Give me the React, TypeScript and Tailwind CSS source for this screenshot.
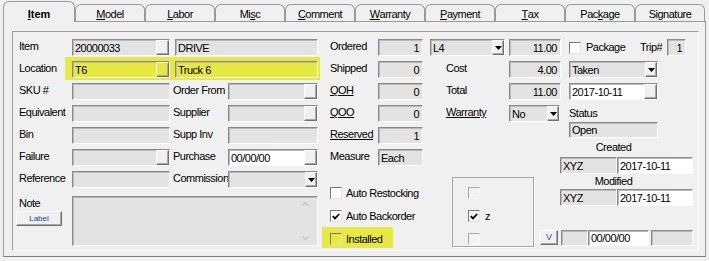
import React from 'react';

const sunken = 'border border-t-[#8a8a8a] border-l-[#8a8a8a] border-b-white border-r-white shadow-[inset_1px_1px_0_#b9b9b9]';
const raised = 'border border-t-white border-l-white border-b-[#6f6f6f] border-r-[#6f6f6f] shadow-[inset_-1px_-1px_0_#a8a8a8]';

type Tone = 'gray' | 'white' | 'yellow';
const toneBg: Record<Tone, string> = {
  gray: 'bg-[#e3e3e3]',
  white: 'bg-white',
  yellow: 'bg-[#e8e843]',
};

function Arrow() {
  return (
    <svg width="7" height="4" viewBox="0 0 7 4">
      <path d="M0 0h7L3.5 4z" fill="#000" />
    </svg>
  );
}

function Field({
  w,
  h = 'h-[17px]',
  value = '',
  right,
  tone = 'gray',
  btn,
  drop,
}: {
  w: string;
  h?: string;
  value?: string;
  right?: boolean;
  tone?: Tone;
  btn?: boolean;
  drop?: boolean;
}) {
  return (
    <div className={`flex shrink-0 items-center ${sunken} ${toneBg[tone]} ${w} ${h}`}>
      <span className={`min-w-0 flex-1 truncate pl-[2px] leading-[14px] ${right ? 'pr-[3px] text-right' : ''}`}>{value}</span>
      {btn && <span className={`w-[13px] self-stretch ${raised} ${tone === 'yellow' ? 'bg-[#e8e843]' : 'bg-[#f0f0f0]'}`} />}
      {drop && (
        <span className={`flex w-[12px] items-center justify-center self-stretch bg-[#f0f0f0] ${raised}`}>
          <Arrow />
        </span>
      )}
    </div>
  );
}

function Lbl({ w = 'w-[53px]', u, children }: { w?: string; u?: boolean; children: React.ReactNode }) {
  return <span className={`shrink-0 self-start whitespace-nowrap leading-[14px] ${u ? 'underline' : ''} ${w}`}>{children}</span>;
}

function Row({ children }: { children: React.ReactNode }) {
  return <div className="flex h-[17px]">{children}</div>;
}

function Check({ checked, bg = 'bg-white', dim }: { checked?: boolean; bg?: string; dim?: boolean }) {
  return (
    <span
      className={`flex h-[12px] w-[12px] shrink-0 items-center justify-center border ${
        dim ? 'border-t-[#a9a9a9] border-l-[#a9a9a9] border-b-[#f8f8f8] border-r-[#f8f8f8]' : 'border-t-[#7a7a7a] border-l-[#7a7a7a] border-b-[#e4e4e4] border-r-[#e4e4e4]'
      } ${bg}`}
    >
      {checked && (
        <svg width="8" height="7" viewBox="0 0 8 7">
          <path d="M0.8 3.2 3 5.4 7.2 1" fill="none" stroke="#000" strokeWidth="1.8" />
        </svg>
      )}
    </span>
  );
}

function CheckRow({ checked, bg, children }: { checked?: boolean; bg?: string; children: React.ReactNode }) {
  return (
    <div className="flex h-[12px] items-center gap-[4px]">
      <Check checked={checked} bg={bg} />
      <span className="whitespace-nowrap leading-[14px]">{children}</span>
    </div>
  );
}

function Acc({ text, at }: { text: string; at: number }) {
  if (at < 0) return <>{text}</>;
  return (
    <>
      {text.slice(0, at)}
      <span className="underline">{text[at]}</span>
      {text.slice(at + 1)}
    </>
  );
}

const tabs: [string, number][] = [
  ['Model', 0],
  ['Labor', 0],
  ['Misc', 2],
  ['Comment', 0],
  ['Warranty', 0],
  ['Payment', 0],
  ['Tax', 0],
  ['Package', 3],
  ['Signature', -1],
];

export default function App() {
  return (
    <div className="h-[261px] w-[709px] overflow-hidden bg-[#f0f0f0] font-['Liberation_Sans',Arial,sans-serif] text-[11px] tracking-[-0.5px] text-black">
      {/* tab strip */}
      <div className="ml-[3px] flex h-[22px] w-[703px] items-end border-b border-[#9a9a9a]">
        <div className="-mb-px flex h-[21px] w-[72px] shrink-0 items-center justify-center rounded-t-[6px] border border-b-0 border-[#9a9a9a] bg-[#f0f0f0] pt-[4px] font-bold tracking-normal">
          <Acc text="Item" at={0} />
        </div>
        {tabs.map(([t, u]) => (
          <div
            key={t}
            className="flex h-[17px] w-[70px] shrink-0 items-center justify-center rounded-t-[6px] border border-b-0 border-[#9a9a9a] pt-[2px]"
          >
            <Acc text={t} at={u} />
          </div>
        ))}
      </div>

      {/* tab page */}
      <div className="ml-[3px] h-[235px] w-[703px] border border-t-0 border-[#9a9a9a] border-b-[#7f7f7f] pl-[8px] pt-[9px]">
        <div className="flex h-[220px] w-[687px] items-start border border-t-[#a0a0a0] border-l-[#a0a0a0] border-b-white border-r-white pl-[6px] pt-[7px]">
          {/* left block */}
          <div className="flex w-[299px] shrink-0 flex-col">
            <div className="flex flex-col gap-[5px]">
              <Row>
                <Lbl>Item</Lbl>
                <Field w="w-[98px]" value="20000033" btn />
                <div className="ml-[5px]">
                  <Field w="w-[143px]" value="DRIVE" />
                </div>
              </Row>
              <Row>
                <Lbl>Location</Lbl>
                <div className="-mb-[2px] -ml-[7px] -mr-[2px] -mt-[4px] flex self-start bg-[#e8e843] pb-[2px] pl-[7px] pr-[2px] pt-[4px]">
                  <Field w="w-[98px]" tone="yellow" value="T6" btn />
                  <div className="ml-[5px]">
                    <Field w="w-[143px]" tone="yellow" value="Truck 6" />
                  </div>
                </div>
              </Row>
              <Row>
                <Lbl>SKU #</Lbl>
                <Field w="w-[98px]" />
                <Lbl w="w-[55px] ml-[3px]">Order From</Lbl>
                <Field w="w-[90px]" btn />
              </Row>
              <Row>
                <Lbl>Equivalent</Lbl>
                <Field w="w-[98px]" />
                <Lbl w="w-[55px] ml-[3px]">Supplier</Lbl>
                <Field w="w-[90px]" btn />
              </Row>
              <Row>
                <Lbl>Bin</Lbl>
                <Field w="w-[98px]" />
                <Lbl w="w-[55px] ml-[3px]">Supp Inv</Lbl>
                <Field w="w-[90px]" />
              </Row>
              <Row>
                <Lbl>Failure</Lbl>
                <Field w="w-[98px]" btn />
                <Lbl w="w-[55px] ml-[3px]">Purchase</Lbl>
                <Field w="w-[90px]" tone="white" value="00/00/00" btn />
              </Row>
              <Row>
                <Lbl>Reference</Lbl>
                <Field w="w-[98px]" />
                <Lbl w="w-[55px] ml-[3px]">Commission</Lbl>
                <Field w="w-[90px]" drop />
              </Row>
            </div>
            <div className="mt-[8px] flex">
              <div className="flex w-[53px] shrink-0 flex-col">
                <span className="leading-[14px]">Note</span>
                <button
                  type="button"
                  className={`-ml-[3px] mt-[1px] flex h-[15px] w-[46px] items-center justify-center bg-[#f0f0f0] text-[8px] leading-none tracking-normal text-[#1c3f94] ${raised}`}
                >
                  Label
                </button>
              </div>
              <div className={`flex h-[50px] w-[246px] justify-end bg-[#e3e3e3] ${sunken}`}>
                <div className="mr-[3px] flex w-[17px] flex-col items-center justify-between py-[4px]">
                  <svg width="7" height="6" viewBox="0 0 7 6">
                    <path d="M0.5 4.5 3.5 1.5 6.5 4.5" fill="none" stroke="#bdbdbd" strokeWidth="1.2" />
                  </svg>
                  <svg width="7" height="6" viewBox="0 0 7 6">
                    <path d="M0.5 1.5 3.5 4.5 6.5 1.5" fill="none" stroke="#bdbdbd" strokeWidth="1.2" />
                  </svg>
                </div>
              </div>
            </div>
          </div>

          {/* middle block */}
          <div className="ml-[12px] flex w-[231px] shrink-0 flex-col">
            <div className="flex flex-col gap-[5px]">
              <Row>
                <Lbl w="w-[48px]">Ordered</Lbl>
                <Field w="w-[45px]" value="1" right />
                <div className="ml-[7px]">
                  <Field w="w-[75px]" value="L4" drop />
                </div>
                <div className="ml-[4px]">
                  <Field w="w-[52px]" value="11.00" right />
                </div>
              </Row>
              <Row>
                <Lbl w="w-[48px]">Shipped</Lbl>
                <Field w="w-[45px]" value="0" right />
                <Lbl w="w-[75px] ml-[7px] pl-[16px]">Cost</Lbl>
                <div className="ml-[4px]">
                  <Field w="w-[52px]" value="4.00" right />
                </div>
              </Row>
              <Row>
                <Lbl w="w-[48px]" u>
                  QOH
                </Lbl>
                <Field w="w-[45px]" value="0" right />
                <Lbl w="w-[75px] ml-[7px] pl-[16px]">Total</Lbl>
                <div className="ml-[4px]">
                  <Field w="w-[52px]" value="11.00" right />
                </div>
              </Row>
              <Row>
                <Lbl w="w-[48px]" u>
                  QOO
                </Lbl>
                <Field w="w-[45px]" value="0" right />
                <span className="ml-[7px] w-[75px] shrink-0 self-start pl-[16px] leading-[14px]">
                  <span className="underline">Warranty</span>
                </span>
                <div className="ml-[4px]">
                  <Field w="w-[51px]" value="No" drop />
                </div>
              </Row>
              <Row>
                <Lbl w="w-[48px]" u>
                  Reserved
                </Lbl>
                <Field w="w-[45px]" value="1" right />
              </Row>
              <Row>
                <Lbl w="w-[48px]">Measure</Lbl>
                <Field w="w-[45px]" value="Each" />
              </Row>
            </div>
            <div className="flex">
              <div className="flex w-[122px] shrink-0 flex-col gap-[11px] pt-[21px]">
                <CheckRow>Auto Restocking</CheckRow>
                <CheckRow checked>Auto Backorder</CheckRow>
                <div className="-mb-[3px] -ml-[8px] -mt-[6px] w-[71px] bg-[#e8e843] pb-[3px] pl-[8px] pt-[6px]">
                  <CheckRow bg="bg-[#e8e843]">Installed</CheckRow>
                </div>
              </div>
              <div className="mt-[11px] flex h-[70px] w-[82px] shrink-0 flex-col gap-[11px] border border-[#a6a6a6] pl-[15px] pt-[9px] shadow-[1px_1px_0_#ffffff]">
                <Check dim bg="bg-[#f3f3f3]" />
                <div className="flex h-[12px] items-center gap-[5px]">
                  <Check checked bg="bg-[#f3f3f3]" />
                  <span className="leading-[14px]">z</span>
                </div>
                <Check dim bg="bg-[#f3f3f3]" />
              </div>
            </div>
          </div>

          {/* right block */}
          <div className="ml-[8px] flex w-[124px] shrink-0 flex-col">
            <div className="flex h-[17px] items-center">
              <Check />
              <span className="ml-[5px] w-[54px] shrink-0">Package</span>
              <span className="w-[27px] shrink-0">Trip#</span>
              <Field w="w-[19px]" value="1" right />
            </div>
            <div className="mt-[5px]">
              <Field w="w-[89px]" value="Taken" drop />
            </div>
            <div className="mt-[5px]">
              <Field w="w-[89px]" tone="white" value="2017-10-11" btn />
            </div>
            <span className="mt-[6px] leading-[14px]">Status</span>
            <div className="mt-[2px]">
              <Field w="w-[89px]" h="h-[16px]" value="Open" />
            </div>
            <span className="mt-[2px] w-[89px] text-center leading-[14px]">Created</span>
            <div className="-ml-[9px] mt-[3px] flex">
              <Field w="w-[57px]" value="XYZ" />
              <Field w="w-[76px]" tone="white" value="2017-10-11" />
            </div>
            <span className="w-[89px] text-center leading-[14px]">Modified</span>
            <div className="-ml-[9px] mt-[1px] flex">
              <Field w="w-[57px]" value="XYZ" />
              <Field w="w-[76px]" tone="white" value="2017-10-11" />
            </div>
            <div className="-ml-[29px] mt-[24px] flex items-start">
              <button
                type="button"
                className={`flex h-[15px] w-[18px] shrink-0 items-center justify-center bg-[#f0f0f0] text-[9px] leading-none tracking-normal text-[#2a4fb0] ${raised}`}
              >
                V
              </button>
              <div className="ml-[3px]">
                <Field w="w-[27px]" h="h-[16px]" />
              </div>
              <Field w="w-[61px]" h="h-[16px]" tone="white" value="00/00/00" />
              <div className="ml-[2px]">
                <Field w="w-[42px]" h="h-[16px]" />
              </div>
            </div>
          </div>
        </div>
      </div>
    </div>
  );
}
